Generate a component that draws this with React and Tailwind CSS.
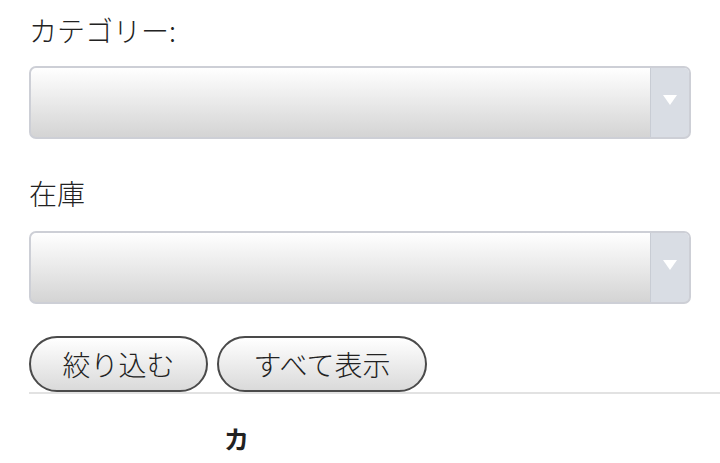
export default function App() {
  const font = { fontFamily: '"Noto Sans CJK JP", "Noto Sans", sans-serif' };
  const Select = () => (
    <div className="flex h-[73px] w-[662px] overflow-hidden rounded-[7px] border-2 border-[#cdcfd6] bg-gradient-to-b from-[#ffffff] to-[#d4d4d4]">
      <div className="flex-1" />
      <div className="flex w-[39px] items-center justify-center border-l border-[#c8ccd4] bg-[#d9dde4] pb-[6px]">
        <svg width="16" height="12" viewBox="0 0 16 12">
          <polygon points="1,1 15,1 8,11" fill="#ffffff" />
        </svg>
      </div>
    </div>
  );
  return (
    <div className="min-h-[463px] w-[720px] overflow-hidden bg-white text-[#222]" style={font}>
      <div className="pl-[29px]">
        <div className="pt-[12px] text-[28px] leading-[36px] font-light">カテゴリー:</div>
        <div className="mt-[18px]"><Select /></div>
        <div className="mt-[36px] text-[28px] leading-[36px] font-light">在庫</div>
        <div className="mt-[20px]"><Select /></div>
        <div className="mt-[32px] flex gap-[9px]">
          <button className="h-[56px] w-[179px] rounded-full border-2 border-[#4a4a4a] bg-gradient-to-b from-[#ffffff] to-[#dadada] text-[28px] font-light text-[#222]">絞り込む</button>
          <button className="h-[56px] w-[210px] rounded-full border-2 border-[#4a4a4a] bg-gradient-to-b from-[#ffffff] to-[#dadada] text-[28px] font-light text-[#222]">すべて表示</button>
        </div>
        <div className="h-[2px] bg-[#e2e2e2]" />
        <div className="flex pl-[195px] pt-[29px]">
          <span className="text-[25px] font-bold leading-[30px]">カ</span>
        </div>
      </div>
    </div>
  );
}
